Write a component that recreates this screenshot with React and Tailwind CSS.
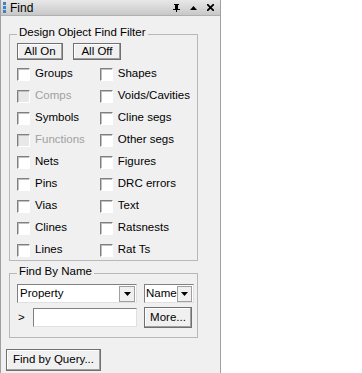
import { useState } from 'react';

const left = ['Groups', 'Comps', 'Symbols', 'Functions', 'Nets', 'Pins', 'Vias', 'Clines', 'Lines'];
const right = ['Shapes', 'Voids/Cavities', 'Cline segs', 'Other segs', 'Figures', 'DRC errors', 'Text', 'Ratsnests', 'Rat Ts'];
const disabled = ['Comps', 'Functions'];

function Check({ label }) {
  const off = disabled.includes(label);
  return (
    <div className="flex items-center h-[22px]">
      <span className={`w-[13px] h-[13px] border border-t-[#808080] border-l-[#808080] border-b-white border-r-white ${off ? 'bg-[#e8e8e8]' : 'bg-white'} shadow-[inset_1px_1px_0_#c0c0c0]`} />
      <span className={`ml-[5px] ${off ? 'text-[#a0a0a0]' : 'text-black'}`}>{label}</span>
    </div>
  );
}

function Btn({ children, className = '' }) {
  return (
    <button className={`bg-[#f0f0f0] border border-[#707070] shadow-[inset_-1px_-1px_0_#a0a0a0,inset_1px_1px_0_#fff] leading-none ${className}`}>
      {children}
    </button>
  );
}

function Arrow() {
  return (
    <span className="w-[16px] h-[16px] bg-[#f0f0f0] border border-[#a0a0a0] flex items-center justify-center">
      <svg width="7" height="4" viewBox="0 0 7 4"><path d="M0 0h7L3.5 4z" fill="#000" /></svg>
    </span>
  );
}

export default function App() {
  const [query] = useState('');
  return (
    <div className="w-[362px] h-[373px] bg-white text-[11.5px]" style={{ fontFamily: '"Liberation Sans", Arial, sans-serif' }}>
      <div className="w-[221px] h-[373px] bg-[#f0f0f0] border-l border-r border-[#a0a0a0] flex flex-col">
        <div className="h-[16px] flex items-center bg-gradient-to-b from-[#e8e8e8] to-[#c8c8c8] border-b border-[#b0b0b0]">
          <span className="ml-[2px] flex flex-col gap-[1px]">
            <span className="w-[3px] h-[3px] bg-[#3b82c8]" />
            <span className="w-[3px] h-[3px] bg-[#3b82c8]" />
            <span className="w-[3px] h-[3px] bg-[#3b82c8]" />
          </span>
          <span className="ml-[4px] text-[12px]">Find</span>
          <span className="ml-auto flex items-center gap-[10px] mr-[6px]">
            <svg width="7" height="8" viewBox="0 0 7 8"><path d="M1 0h5v1H5v4h2v1H4v2H3V6H0V5h2V1H1z" fill="#000" /></svg>
            <svg width="7" height="4" viewBox="0 0 7 4"><path d="M3.5 0L7 4H0z" fill="#000" /></svg>
            <svg width="7" height="7" viewBox="0 0 7 7"><path d="M0 0l7 7M7 0L0 7" stroke="#000" strokeWidth="1.8" /></svg>
          </span>
        </div>

        <div className="ml-[8px] mt-[18px] w-[189px] h-[227px] border border-[#b8b8b8] relative px-[7px] pt-[8px]">
          <span className="absolute -top-[8px] left-[7px] bg-[#f0f0f0] px-[2px] leading-none">Design Object Find Filter</span>
          <div className="flex gap-[10px]">
            <Btn className="w-[46px] h-[17px]">All On</Btn>
            <Btn className="w-[48px] h-[17px] border-[#404040]">All Off</Btn>
          </div>
          <div className="flex mt-[3px]">
            <div className="w-[84px] flex flex-col">
              {left.map((l) => <Check key={l} label={l} />)}
            </div>
            <div className="flex flex-col">
              {right.map((l) => <Check key={l} label={l} />)}
            </div>
          </div>
        </div>

        <div className="ml-[8px] mt-[12px] w-[189px] h-[65px] border border-[#b8b8b8] relative pl-[7px] pr-[3px] pt-[10px]">
          <span className="absolute -top-[8px] left-[7px] bg-[#f0f0f0] px-[2px] leading-none">Find By Name</span>
          <div className="flex gap-[7px]">
            <div className="w-[120px] h-[19px] shrink-0 bg-white border border-t-[#808080] border-l-[#808080] border-b-[#e0e0e0] border-r-[#e0e0e0] flex items-center pl-[2px] pr-[1px]">
              <span className="flex-1">Property</span>
              <Arrow />
            </div>
            <div className="w-[50px] h-[19px] shrink-0 bg-white border border-t-[#808080] border-l-[#808080] border-b-[#e0e0e0] border-r-[#e0e0e0] flex items-center pl-[1px] pr-[1px]">
              <span className="flex-1">Name</span>
              <Arrow />
            </div>
          </div>
          <div className="flex items-center mt-[4px]">
            <span className="w-[16px] pl-[1px]">&gt;</span>
            <input value={query} readOnly className="w-[104px] h-[19px] bg-white border border-t-[#808080] border-l-[#808080] border-b-[#e0e0e0] border-r-[#e0e0e0] outline-none" />
            <Btn className="ml-[7px] w-[48px] h-[21px]">More...</Btn>
          </div>
        </div>

        <div className="ml-[5px] mt-[11px]">
          <Btn className="w-[95px] h-[22px]">Find by Query...</Btn>
        </div>
      </div>
    </div>
  );
}
